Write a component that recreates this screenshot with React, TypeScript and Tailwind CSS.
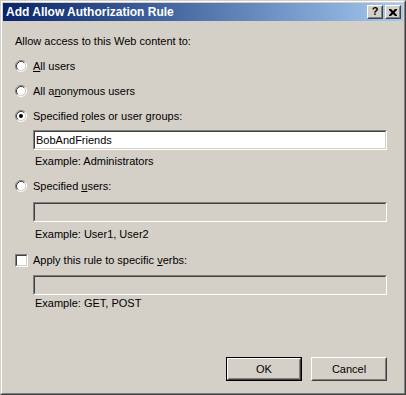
import React from 'react';

function Radio({ checked }: { checked?: boolean }) {
  return (
    <svg width="12" height="12" viewBox="0 0 12 12" className="shrink-0">
      <circle cx="6" cy="6" r="4.5" fill="#fff" />
      <path d="M2.11 9.89 A5.5 5.5 0 0 1 9.89 2.11" stroke="#808080" fill="none" />
      <path d="M9.89 2.11 A5.5 5.5 0 0 1 2.11 9.89" stroke="#fff" fill="none" />
      <path d="M2.82 9.18 A4.5 4.5 0 0 1 9.18 2.82" stroke="#404040" fill="none" />
      <path d="M9.18 2.82 A4.5 4.5 0 0 1 2.82 9.18" stroke="#d4d0c8" fill="none" />
      {checked && <circle cx="6" cy="6" r="2" fill="#000" />}
    </svg>
  );
}

function Checkbox() {
  return (
    <div className="w-[13px] h-[13px] shrink-0 border border-t-[#808080] border-l-[#808080] border-r-white border-b-white">
      <div className="w-full h-full bg-white border border-t-[#404040] border-l-[#404040] border-r-[#d4d0c8] border-b-[#d4d0c8]" />
    </div>
  );
}

function TextBox({ value, disabled }: { value?: string; disabled?: boolean }) {
  return (
    <div className="ml-[18px] h-[20px] border border-t-[#808080] border-l-[#808080] border-r-white border-b-white">
      <div
        className={
          'h-full border border-t-[#404040] border-l-[#404040] border-r-[#d4d0c8] border-b-[#d4d0c8] flex items-center px-[1px] ' +
          (disabled ? 'bg-[#d4d0c8]' : 'bg-white')
        }
      >
        {value}
      </div>
    </div>
  );
}

function Button({ label, isDefault }: { label: string; isDefault?: boolean }) {
  return (
    <div className={'w-[76px] h-[24px] ' + (isDefault ? 'border border-black' : '')}>
      <div className="w-full h-full border border-t-white border-l-white border-r-[#404040] border-b-[#404040]">
        <div className="w-full h-full border border-t-[#d4d0c8] border-l-[#d4d0c8] border-r-[#808080] border-b-[#808080] flex items-center justify-center">
          {label}
        </div>
      </div>
    </div>
  );
}

function CaptionButton({ children }: { children: React.ReactNode }) {
  return (
    <div className="w-[16px] h-[14px] bg-[#d4d0c8] border border-t-white border-l-white border-r-[#404040] border-b-[#404040]">
      <div className="w-full h-full border border-t-[#d4d0c8] border-l-[#d4d0c8] border-r-[#808080] border-b-[#808080] flex items-center justify-center text-black">
        {children}
      </div>
    </div>
  );
}

export default function App() {
  return (
    <div className="w-[406px] h-[395px] bg-[#d4d0c8] text-black text-[11px] leading-none font-['Liberation_Sans',Arial,sans-serif] border border-t-[#d4d0c8] border-l-[#d4d0c8] border-r-[#404040] border-b-[#404040]">
      <div className="w-full h-full border border-t-white border-l-white border-r-[#808080] border-b-[#808080] p-[1px] flex flex-col">
        {/* title bar */}
        <div className="h-[18px] flex items-center bg-gradient-to-r from-[#0a246a] to-[#a6caf0] pl-[3px] pr-[2px]">
          <span className="text-white font-bold text-[12px]">Add Allow Authorization Rule</span>
          <div className="ml-auto flex gap-[2px]">
            <CaptionButton>
              <span className="font-bold text-[11px] leading-none -mt-[1px]">?</span>
            </CaptionButton>
            <CaptionButton>
              <svg width="8" height="7" viewBox="0 0 8 7">
                <path d="M0 0h2l2 2 2-2h2v1L5.5 3.5 8 6v1H6L4 5 2 7H0V6l2.5-2.5L0 1z" fill="#000" />
              </svg>
            </CaptionButton>
          </div>
        </div>

        {/* body */}
        <div className="flex-1 pl-[12px] pr-[16px]">
          <div className="h-[16px] mt-[12px] flex items-center">Allow access to this Web content to:</div>

          <div className="h-[16px] mt-[9px] flex items-center gap-[6px]">
            <Radio />
            <span><span className="underline">A</span>ll users</span>
          </div>
          <div className="h-[16px] mt-[9px] flex items-center gap-[6px]">
            <Radio />
            <span>All a<span className="underline">n</span>onymous users</span>
          </div>
          <div className="h-[16px] mt-[9px] flex items-center gap-[6px]">
            <Radio checked />
            <span>Specified <span className="underline">r</span>oles or user groups:</span>
          </div>

          <div className="mt-[6px]">
            <TextBox value="BobAndFriends" />
          </div>
          <div className="h-[16px] mt-[3px] pl-[20px] flex items-center">Example: Administrators</div>

          <div className="h-[16px] mt-[9px] flex items-center gap-[6px]">
            <Radio />
            <span>Specified <span className="underline">u</span>sers:</span>
          </div>
          <div className="mt-[8px]">
            <TextBox disabled />
          </div>
          <div className="h-[16px] mt-[4px] pl-[20px] flex items-center">Example: User1, User2</div>

          <div className="h-[16px] mt-[10px] flex items-center gap-[5px]">
            <Checkbox />
            <span>Apply this rule to specific <span className="underline">v</span>erbs:</span>
          </div>
          <div className="mt-[7px]">
            <TextBox disabled />
          </div>
          <div className="h-[16px] pl-[20px] flex items-center">Example: GET, POST</div>

          <div className="mt-[46px] flex justify-end gap-[9px]">
            <Button label="OK" isDefault />
            <Button label="Cancel" />
          </div>
        </div>
      </div>
    </div>
  );
}
